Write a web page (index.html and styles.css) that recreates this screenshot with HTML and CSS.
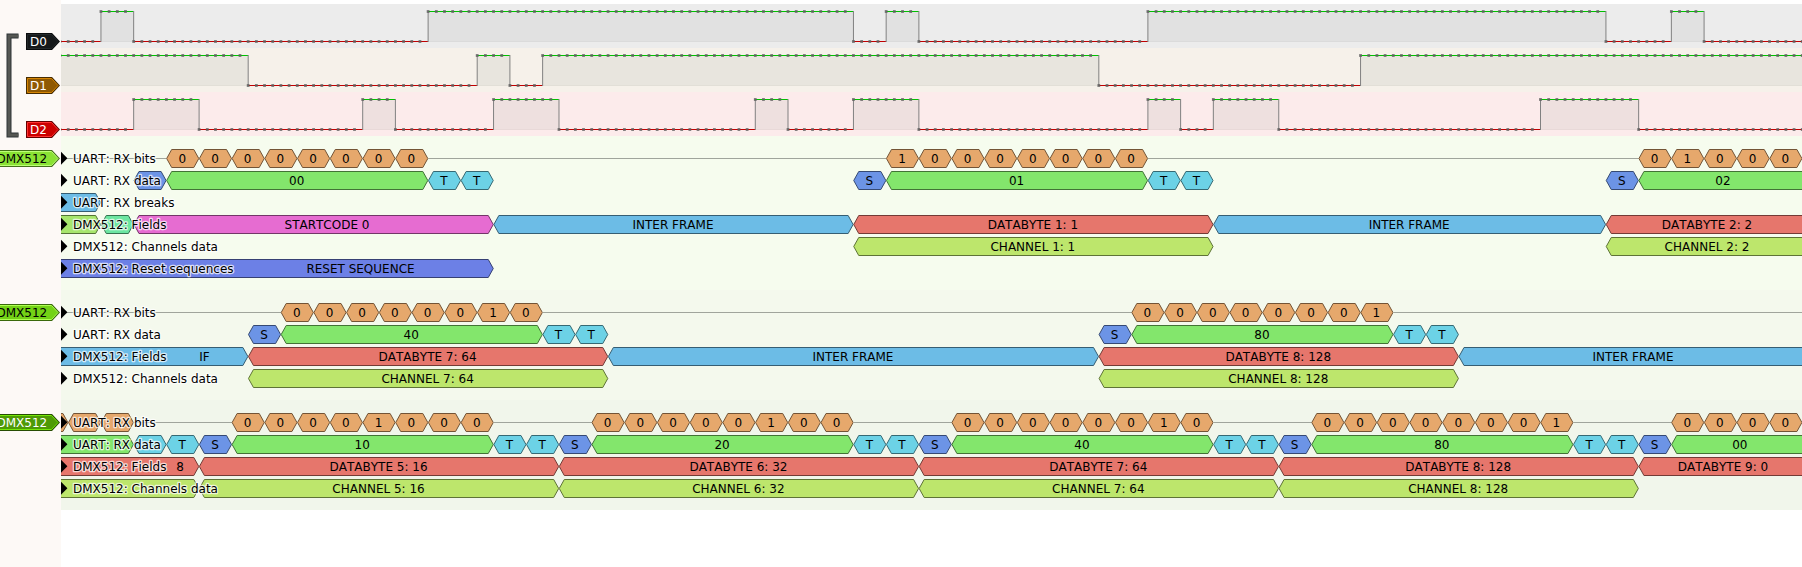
FILE: index.html
```html
<!DOCTYPE html>
<html lang="en">
<head>
<meta charset="utf-8">
<title>Logic trace</title>
<link rel="stylesheet" href="styles.css">
</head>
<body>
<main class="viewer">
  <aside class="header">
    <svg class="header-art" id="header" width="61" height="567"></svg>
  </aside>
  <section class="traces" id="traces"></section>
</main>
<script src="app.js"></script>
</body>
</html>
```
FILE: styles.css
```css
body { margin: 0; background: #fff; font-family: "DejaVu Sans", sans-serif; font-size: 12px; }
.viewer { display: grid; grid-template-columns: 61px 1741px; width: 1802px; height: 567px; overflow: hidden; }
.header { background: #fdf9f6; }
.header-art, .row-art { display: block; overflow: hidden; }
.traces { display: flex; flex-direction: column; padding-top: 4px; }
.lane { height: 44px; }
.lane-d0 { background: #ececec; }
.lane-d1 { background: #f6f1ea; }
.lane-d2 { background: #fcebeb; }
.decoder { padding: 11px 0; }
.decoder-a { height: 132px; background: #f6fcee; }
.decoder-b { height: 88px; background: #f4f9ed; }
.decoder-c { height: 88px; background: #f1f6eb; }
text { font-family: "DejaVu Sans", sans-serif; font-size: 12px; font-kerning: none; fill: #000; }
.ann { stroke-width: 1; stroke-linejoin: round; }
.ann-label { text-anchor: middle; }
.row-title { stroke: rgba(255, 255, 255, .72); stroke-width: 2.6px; stroke-linejoin: round; paint-order: stroke; }
.idle { stroke: #a0a59c; stroke-width: 1; }
.high { stroke: #00c000; stroke-width: 1; }
.low { stroke: #c00000; stroke-width: 1; }
.edge { stroke: #808080; stroke-width: 1; }
.fill { fill: rgba(0, 0, 0, .045); }
.lane-d1 .fill, .lane-d2 .fill { fill: rgba(0, 30, 20, .055); }
.base { stroke: rgba(0, 0, 0, .05); stroke-width: 1; }
.dot { fill: rgba(96, 96, 96, .85); }
.light { fill: #fff; }
```
FILE: app.js
```js
const LEFT = 61, WIDTH = 1741, ORIGIN = 133.67 - LEFT, BIT = 32.717;
const bx = k => ORIGIN + k * BIT;
const COLORS = {
  bit: ['#e6a86c', '#735436'], data: ['#83e66c', '#427336'], start: ['#6c94e6', '#364a73'],
  stop: ['#6cd2e6', '#366973'], brk: ['#6cbce6', '#365e73'], mab: ['#6ce6a1', '#367350'],
  lime: ['#a6e66c', '#537336'], code: ['#e66cd1', '#733668'], byte: ['#e6766c', '#733b36'],
  chan: ['#bde66c', '#5e7336'], reset: ['#6c80e6', '#364073']
};

/* Logic channels: each list holds the bit positions where the level toggles. */
const lanes = [
  ['d0', 0, [-1, 0, 9, 22, 23, 24, 31, 45, 47, 48]],
  ['d1', 1, [3.5, 10.5, 11.5, 12.5, 29.5, 37.5]],
  ['d2', 0, [0, 2, 7, 8, 11, 13, 19, 20, 22, 24, 31, 32, 33, 35, 43, 46]]
];

function laneArt([name, initial, toggles]) {
  const hi = 7.5, lo = 37.5, stops = [-3, ...toggles, 60];
  let level = initial, fills = '', lines = '', dots = '';
  for (let i = 0; i < stops.length - 1; i++) {
    const a = bx(stops[i]), b = bx(stops[i + 1]), y = level ? hi : lo;
    if (level) fills += `<rect class="fill" x="${a}" y="${hi}" width="${b - a}" height="30"/><path class="base" d="M${a} ${lo}H${b}"/>`;
    lines += `<path class="${level ? 'high' : 'low'}" d="M${a} ${y}H${b}"/>`;
    if (i) lines += `<path class="edge" d="M${a} ${hi - .5}V${lo + .5}"/>`;
    for (let k = stops[i]; k < stops[i + 1]; k += .25)
      dots += `<rect class="dot" x="${bx(k) - 1.4}" y="${y - 1.4}" width="2.8" height="2.8"/>`;
    level = 1 - level;
  }
  return `<div class="lane lane-${name}"><svg class="row-art" width="${WIDTH}" height="44">${fills}${lines}${dots}</svg></div>`;
}

/* Annotations: [colour, from bit, to bit, label, optional label centre]. */
const bits = (k, s) => [...s].map((c, i) => ['bit', k + i, k + i + 1, c]);
const frame = (k, value) => [['start', k, k + 1, 'S'], ['data', k + 1, k + 9, value], ['stop', k + 9, k + 10, 'T'], ['stop', k + 10, k + 11, 'T']];

const decoders = [
  ['a', [
    ['UART: RX bits', [...bits(1, '00000000'), ...bits(23, '10000000'), ...bits(46, '01000'), ['bit', 51, 52, '']]],
    ['UART: RX data', [['start', 0, 1, ''], ...frame(0, '00').slice(1), ...frame(22, '01'), ['start', 45, 46, 'S'], ['data', 46, 54, '02', 1723]]],
    ['UART: RX breaks', [['brk', -5, -1, '']]],
    ['DMX512: Fields', [['lime', -5, -1, ''], ['mab', -1, 0, ''], ['code', 0, 11, 'STARTCODE 0', 327], ['brk', 11, 22, 'INTER FRAME'], ['byte', 22, 33, 'DATABYTE 1: 1'], ['brk', 33, 45, 'INTER FRAME'], ['byte', 45, 56, 'DATABYTE 2: 2', 1707]]],
    ['DMX512: Channels data', [['chan', 22, 33, 'CHANNEL 1: 1'], ['chan', 45, 56, 'CHANNEL 2: 2', 1707]]],
    ['DMX512: Reset sequences', [['reset', -5, 11, 'RESET SEQUENCE', 360.5]]]
  ]],
  ['b', [
    ['UART: RX bits', [...bits(4.5, '00000010'), ...bits(30.5, '00000001')]],
    ['UART: RX data', [...frame(3.5, '40'), ...frame(29.5, '80')]],
    ['DMX512: Fields', [['brk', -5, 3.5, 'IF', 204.5], ['byte', 3.5, 14.5, 'DATABYTE 7: 64'], ['brk', 14.5, 29.5, 'INTER FRAME'], ['byte', 29.5, 40.5, 'DATABYTE 8: 128'], ['brk', 40.5, 60, 'INTER FRAME', 1633]]],
    ['DMX512: Channels data', [['chan', 3.5, 14.5, 'CHANNEL 7: 64'], ['chan', 29.5, 40.5, 'CHANNEL 8: 128']]]
  ]],
  ['c', [
    ['UART: RX bits', [...bits(-3, '   '), ...bits(3, '00001000'), ...bits(14, '00000100'), ...bits(25, '00000010'), ...bits(36, '00000001'), ...bits(47, '0000'), ['bit', 51, 52, '']]],
    ['UART: RX data', [['data', -8, 0, ''], ['stop', 0, 1, ''], ['stop', 1, 2, 'T'], ...frame(2, '10'), ...frame(13, '20'), ...frame(24, '40'), ...frame(35, '80'), ['start', 46, 47, 'S'], ['data', 47, 55, '00', 1739.8]]],
    ['DMX512: Fields', [['byte', -9, 2, '8', 180], ['byte', 2, 13, 'DATABYTE 5: 16'], ['byte', 13, 24, 'DATABYTE 6: 32'], ['byte', 24, 35, 'DATABYTE 7: 64'], ['byte', 35, 46, 'DATABYTE 8: 128'], ['byte', 46, 57, 'DATABYTE 9: 0', 1723]]],
    ['DMX512: Channels data', [['chan', -9, 2, ''], ['chan', 2, 13, 'CHANNEL 5: 16'], ['chan', 13, 24, 'CHANNEL 6: 32'], ['chan', 24, 35, 'CHANNEL 7: 64'], ['chan', 35, 46, 'CHANNEL 8: 128']]]
  ]]
];

function rowArt([title, anns]) {
  const mid = 11.5;
  let out = '', cursor = 0;
  for (const [color, from, to, label, centre] of anns) {
    const a = bx(from), b = bx(to), [fill, stroke] = COLORS[color];
    if (title === 'UART: RX bits' && a > cursor + 1) out += `<path class="idle" d="M${cursor} ${mid}H${a}"/>`;
    cursor = b;
    out += `<path class="ann" fill="${fill}" stroke="${stroke}" d="M${a + .3} ${mid}l5-9H${b - 5.3}l5 9l-5 9H${a + 5.3}z"/>`;
    if (label.trim()) out += `<text class="ann-label" x="${centre ? centre - LEFT : (a + b) / 2 - .5}" y="16">${label}</text>`;
  }
  if (title === 'UART: RX bits' && cursor < WIDTH) out += `<path class="idle" d="M${cursor} ${mid}H${WIDTH}"/>`;
  out += `<path d="M0 4.8L6.4 11.3L0 17.8z"/><text class="row-title" x="12" y="16">${title}</text>`;
  return `<svg class="row-art" width="${WIDTH}" height="22">${out}</svg>`;
}

document.getElementById('traces').innerHTML = lanes.map(laneArt).join('') +
  decoders.map(([id, rows]) => `<div class="decoder decoder-${id}">${rows.map(rowArt).join('')}</div>`).join('');

function tag(x, y, text, textX, fill, rim, edge, light) {
  return `<path fill="${edge}" d="M${x} ${y - 8.5}H52L60 ${y}L52 ${y + 8.5}H${x}z"/>
    <path fill="${fill}" stroke="${rim}" d="M${x + 1.5} ${y - 7}H51.5L58 ${y}L51.5 ${y + 7}H${x + 1.5}z"/>
    <text class="${light ? 'light' : ''}" x="${textX}" y="${y + 4.5}">${text}</text>`;
}

document.getElementById('header').innerHTML =
  `<path fill="none" stroke="#2e3436" stroke-width="5" d="M18.5 36H9V135H18.5"/>
   <path fill="none" stroke="#555753" stroke-width="3" d="M18.5 36H9V135H18.5"/>` +
  tag(26, 41.5, 'D0', 30, '#16191a', '#24292a', '#0b0c0d', 1) +
  tag(26, 85.5, 'D1', 30, '#8f5902', '#d68503', '#472c01', 1) +
  tag(26, 129.5, 'D2', 30, '#cc0000', '#ff3333', '#660000', 1) +
  tag(-20, 158.5, 'DMX512', -3.5, '#8ae234', '#bcff76', '#45711a', 0) +
  tag(-20, 312.5, 'DMX512', -3.5, '#73d216', '#adff50', '#39690b', 0) +
  tag(-20, 422.5, 'DMX512', -3.5, '#4e9a06', '#75e709', '#274d03', 1);
```
